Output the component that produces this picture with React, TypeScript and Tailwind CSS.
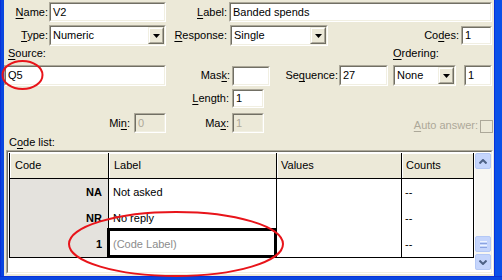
import React from 'react';

// Sunken XP-classic edit frame
const Edit: React.FC<{ className?: string; value?: string; disabled?: boolean }> = ({ className = '', value = '', disabled }) => (
  <div className={`border border-t-[#ACA899] border-l-[#ACA899] border-b-white border-r-white ${className}`}>
    <div
      className={`h-full w-full border border-t-[#716F64] border-l-[#716F64] border-b-[#F1EFE2] border-r-[#F1EFE2] flex items-center pl-[2px] ${
        disabled ? 'bg-[#ECE9D8] text-[#ACA899]' : 'bg-white text-black'
      }`}
    >
      {value}
    </div>
  </div>
);

const DropButton: React.FC = () => (
  <div className="h-full w-[16px] border border-t-[#F1EFE2] border-l-[#F1EFE2] border-b-[#716F64] border-r-[#716F64]">
    <div className="h-full w-full border border-t-white border-l-white border-b-[#ACA899] border-r-[#ACA899] bg-[#ECE9D8] flex items-center justify-center">
      <svg width="7" height="4" viewBox="0 0 7 4">
        <path d="M0 0h7L3.5 4z" fill="#000" />
      </svg>
    </div>
  </div>
);

const Combo: React.FC<{ className?: string; value: string }> = ({ className = '', value }) => (
  <div className={`border border-t-[#ACA899] border-l-[#ACA899] border-b-white border-r-white ${className}`}>
    <div className="h-full w-full border border-t-[#716F64] border-l-[#716F64] border-b-[#F1EFE2] border-r-[#F1EFE2] bg-white flex items-stretch">
      <div className="flex-1 flex items-center pl-[2px]">{value}</div>
      <div className="py-[0px]">
        <DropButton />
      </div>
    </div>
  </div>
);

const U: React.FC<{ c: string }> = ({ c }) => <span className="underline decoration-1 underline-offset-[2px]">{c}</span>;

const ScrollBtn: React.FC<{ up?: boolean }> = ({ up }) => (
  <div className="h-[16px] w-[16px] rounded-[2px] border border-[#B4C8F6] bg-[#C5D5FC] flex items-center justify-center">
    <svg width="8" height="5" viewBox="0 0 8 5">
      <path d={up ? 'M0.5 4.5L4 1l3.5 3.5' : 'M0.5 0.5L4 4l3.5-3.5'} stroke="#4D6185" strokeWidth="2" fill="none" />
    </svg>
  </div>
);

const rows = [
  { code: 'NA', label: 'Not asked' },
  { code: 'NR', label: 'No reply' },
  { code: '1', label: '(Code Label)', placeholder: true },
];

export default function App() {
  return (
    <div className="relative w-[502px] h-[280px] flex flex-col overflow-hidden text-[11px] leading-[13px] text-black font-['Liberation_Sans',Arial,sans-serif]">
      <div className="flex flex-1 min-h-0">
        <div className="w-[4px] bg-[#0A46DF] border-l border-[#0831D9]" />
        <div className="flex-1 bg-[#ECE9D8] flex flex-col">
          {/* row 1 */}
          <div className="flex items-center mt-[2px] h-[20px]">
            <div className="w-[45px] text-right pr-[1px]"><U c="N" />ame:</div>
            <Edit className="w-[117px] h-[20px]" value="V2" />
            <div className="w-[63px] text-right pr-[2px]"><U c="L" />abel:</div>
            <Edit className="w-[263px] h-[20px]" value="Banded spends" />
          </div>
          {/* row 2 */}
          <div className="flex items-center mt-[3px] h-[21px]">
            <div className="w-[45px] text-right pr-[1px]"><U c="T" />ype:</div>
            <Combo className="w-[117px] h-[21px]" value="Numeric" />
            <div className="w-[64px] text-right pr-[3px]"><U c="R" />esponse:</div>
            <Combo className="w-[98px] h-[21px]" value="Single" />
            <div className="flex-1 text-right pr-[2px]">Co<U c="d" />es:</div>
            <Edit className="w-[31px] h-[19px] mr-[2px]" value="1" />
          </div>
          {/* row 3 */}
          <div className="flex h-[19px] pt-[1px]">
            <div className="w-[389px] pl-[4px]"><U c="S" />ource:</div>
            <div><U c="O" />rdering:</div>
          </div>
          {/* row 4 */}
          <div className="flex items-center h-[21px]">
            <Edit className="w-[162px] h-[21px]" value="Q5" />
            <div className="w-[66px] text-right pr-[2px]">Mas<U c="k" />:</div>
            <Edit className="w-[38px] h-[20px]" />
            <div className="w-[69px] text-right pr-[1px]">Se<U c="q" />uence:</div>
            <Edit className="w-[49px] h-[21px]" value="27" />
            <Combo className="w-[63px] h-[21px] ml-[5px]" value="None" />
            <Edit className="w-[28px] h-[21px] ml-[8px]" value="1" />
          </div>
          {/* row 5 */}
          <div className="flex items-center mt-[3px] h-[19px]">
            <div className="w-[228px] text-right pr-[3px]"><U c="L" />ength:</div>
            <Edit className="w-[32px] h-[19px]" value="1" />
          </div>
          {/* row 6 */}
          <div className="flex items-center mt-[5px] h-[20px]">
            <div className="w-[130px] text-right pr-[4px]">Mi<U c="n" />:</div>
            <Edit className="w-[32px] h-[20px]" value="0" disabled />
            <div className="w-[66px] text-right pr-[3px]">Ma<U c="x" />:</div>
            <Edit className="w-[32px] h-[20px]" value="1" disabled />
            <div className="flex-1 flex items-end justify-end self-end pr-[1px]">
              <span className="text-[#ACA899] pr-[2px] pb-[1px]"><U c="A" />uto answer:</span>
              <div className="w-[13px] h-[13px] border border-[#ACA899] bg-[#ECE9D8]" />
            </div>
          </div>
          {/* code list label */}
          <div className="mt-[3px] pl-[5px] h-[14px]">C<U c="o" />de list:</div>
          {/* table frame */}
          <div className="ml-[2px] w-[487px] h-[124px] border border-t-[#ACA899] border-l-[#ACA899] border-b-white border-r-white">
            <div className="h-full w-full border border-t-[#716F64] border-l-[#716F64] border-b-[#F1EFE2] border-r-[#F1EFE2] bg-white flex pt-[1px] pl-[1px]">
              <div className="w-[465px] flex flex-col">
                <div className="flex h-[26px] border-l border-b border-black">
                  <div className="w-[99px] border-r border-black bg-[#ECE9D8] shadow-[inset_1px_1px_0_#fff] flex items-center pl-[5px]">Code</div>
                  <div className="w-[168px] border-r border-black bg-[#ECE9D8] shadow-[inset_1px_1px_0_#fff] flex items-center pl-[5px]">Label</div>
                  <div className="w-[125px] border-r border-black bg-[#ECE9D8] shadow-[inset_1px_1px_0_#fff] flex items-center pl-[4px]">Values</div>
                  <div className="w-[72px] border-r border-black bg-[#ECE9D8] shadow-[inset_1px_1px_0_#fff] flex items-center pl-[4px]">Counts</div>
                </div>
                <div className="flex flex-col border-l border-b border-black">
                  {rows.map((r) => (
                    <div key={r.code} className="flex h-[26px]">
                      <div className="w-[99px] border-r border-black bg-[#E4E2DD] flex items-center justify-end pr-[6px] font-bold">{r.code}</div>
                      <div className="relative w-[168px] border-r border-black flex items-center pl-[4px]">
                        <span className={r.placeholder ? 'text-[#8C8C8C]' : ''}>{r.label}</span>
                        {r.placeholder && (
                          <div className="absolute -left-[2px] -top-[3px] -right-[1px] -bottom-[1px] border-[3px] border-black" />
                        )}
                      </div>
                      <div className="w-[125px] border-r border-black" />
                      <div className="w-[72px] border-r border-black flex items-center pl-[3px]">--</div>
                    </div>
                  ))}
                </div>
              </div>
              <div className="w-[16px] ml-[1px] h-[117px] bg-[#F7F6F2] flex flex-col">
                <ScrollBtn up />
                <div className="flex-1 flex flex-col justify-end pb-[2px]">
                  <div className="h-[16px] w-[16px] rounded-[2px] border border-[#B4C8F6] bg-[#C5D5FC] flex flex-col items-center justify-center gap-[1px]">
                    <div className="w-[7px] h-[1px] bg-[#EEF4FE]" />
                    <div className="w-[7px] h-[1px] bg-[#8CA4E0]" />
                    <div className="w-[7px] h-[1px] bg-[#EEF4FE]" />
                    <div className="w-[7px] h-[1px] bg-[#8CA4E0]" />
                  </div>
                </div>
                <ScrollBtn />
              </div>
            </div>
          </div>
        </div>
        <div className="w-[8px] bg-[#0A50E8] border-l border-[#0831D9]" />
      </div>
      <div className="h-[4px] bg-[#0A46DF] border-t border-[#0831D9]" />

      <svg className="absolute inset-0 pointer-events-none" width="502" height="280">
        <ellipse cx="22.5" cy="75" rx="20" ry="14" fill="none" stroke="#E8141A" strokeWidth="2" />
        <ellipse cx="176" cy="244" rx="107" ry="32" fill="none" stroke="#E8141A" strokeWidth="2" />
      </svg>
    </div>
  );
}
